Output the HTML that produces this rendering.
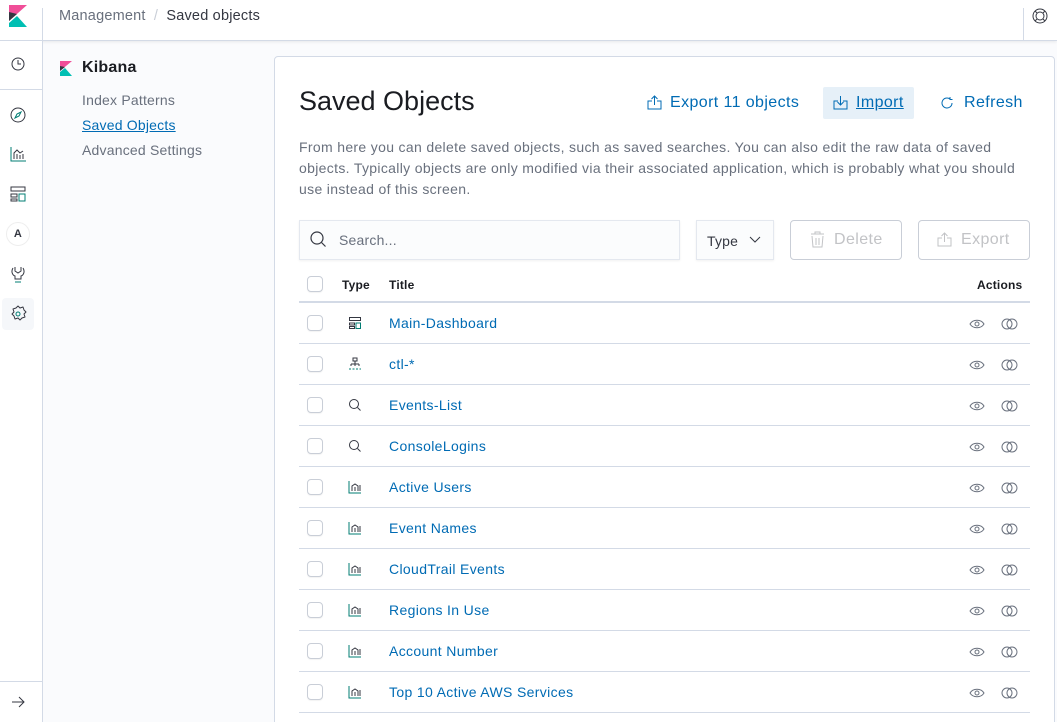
<!DOCTYPE html>
<html><head><meta charset="utf-8"><style>
*{box-sizing:border-box;margin:0;padding:0}
html{width:1057px;height:722px;overflow:hidden}
body{width:1057px;height:722px;overflow:hidden;background:#fafbfd;font-family:"Liberation Sans",sans-serif;position:relative;color:#343741;letter-spacing:.2px}
.top{position:absolute;left:0;top:0;width:1057px;height:41px;background:#fff;border-bottom:1px solid #d3dae6;box-shadow:0 1px 3px rgba(0,0,0,.08)}
.nav{position:absolute;left:0;top:41px;width:43px;height:681px;background:#fff;border-right:1px solid #d3dae6}
.ab{position:absolute}
.side{position:absolute;left:43px;top:41px;width:231px;height:681px}
.panel{position:absolute;left:274px;top:56px;width:781px;height:680px;background:#fff;border:1px solid #d3dae6;border-radius:4px}
.lnk{color:#006bb4}
.row{position:absolute;left:299px;width:731px;height:41px;border-bottom:1px solid #d3dae6}
.cb{position:absolute;left:8px;top:12px;width:16px;height:16px;border:1px solid #c9ced7;border-radius:4px;background:#fff;box-shadow:0 1px 1px rgba(0,0,0,.05)}
.row .t{position:absolute;left:90px;top:12px;font-size:14px;color:#006bb4;letter-spacing:.35px}
.row .ic{position:absolute;left:49px;top:13px}
.row .a1{position:absolute;left:670px;top:14px}
.row .a2{position:absolute;left:702px;top:14px}
</style></head><body>
<div class="top">
 <svg class="ab" style="left:9px;top:5px" width="18" height="22" viewBox="0 0 18 22"><path d="M0 0h18L0 16z" fill="#f04e98"/><path d="M0 7v9l8-7z" fill="#343741"/><path d="M0 22h18L8 11 0 18z" fill="#00bfb3"/></svg>
 <div class="ab" style="left:42px;top:8px;width:1px;height:33px;background:#d3dae6"></div>
 <div class="ab" style="left:59px;top:8px;font-size:14.5px;color:#69707d">Management <span style="color:#c9ced7;margin:0 4px">/</span> <span style="color:#343741">Saved objects</span></div>
 <div class="ab" style="left:1023px;top:8px;width:1px;height:33px;background:#d3dae6"></div>
 <svg class="ab" style="left:1032px;top:8px" width="16" height="16" viewBox="0 0 16 16" fill="none" stroke="#343741"><circle cx="8" cy="8" r="7"/><circle cx="8" cy="8" r="4"/><path d="M3 3l2 2M13 3l-2 2M3 13l2-2M13 13l-2-2"/></svg>
</div>
<div class="nav">
 <svg class="ab" style="left:11px;top:16px" width="14" height="14" viewBox="0 0 14 14" fill="none" stroke="#343741"><circle cx="7" cy="7" r="6"/><path d="M7 3v4h3"/></svg>
 <div class="ab" style="left:0;top:48px;width:42px;height:1px;background:#d3dae6"></div>
 <svg class="ab" style="left:10px;top:66px" width="16" height="16" viewBox="0 0 16 16" fill="none"><circle cx="8" cy="8" r="7" stroke="#343741"/><path d="M5 11l2-4 4-2-2 4z" stroke="#017d73"/></svg>
 <svg class="ab" style="left:10px;top:105px" width="16" height="16" viewBox="0 0 16 16" fill="none" stroke="#343741"><path d="M1 1v14h15" stroke="#017d73"/><path d="M4 13V7l3-3 3 3 3-2M7 13V8M10 13V9M13 13V8"/></svg>
 <svg class="ab" style="left:10px;top:145px" width="16" height="16" viewBox="0 0 16 16" fill="none" stroke="#343741"><rect x="1" y="1" width="14" height="4"/><rect x="1" y="8" width="6" height="3"/><rect x="1" y="13" width="6" height="2"/><rect x="9" y="8" width="6" height="7" stroke="#017d73"/></svg>
 <div class="ab" style="left:6px;top:181px;width:24px;height:24px;border:1px solid #eee;border-radius:12px;font-size:11px;font-weight:bold;text-align:center;line-height:22px">A</div>
 <svg class="ab" style="left:11px;top:225px" width="14" height="17" viewBox="0 0 14 17" fill="none" stroke="#343741"><path d="M4 1v4l3 2 3-2V1M2 2C0 5 1 9 4 10v3h6v-3c3-1 4-5 2-8"/><path d="M4 16h6" stroke="#017d73"/></svg>
 <div class="ab" style="left:2px;top:257px;width:32px;height:32px;background:#f5f7fa;border-radius:4px"></div>
 <svg class="ab" style="left:9px;top:264px" width="18" height="18" viewBox="0 0 18 18" fill="none" stroke="#343741"><path d="M9 1l2 2 3-1 1 3 2 2-2 2 1 3-3 1-2 2-2-2-3 1-1-3-2-2 2-2-1-3 3-1z" stroke-linejoin="round"/><circle cx="9" cy="9" r="2" stroke="#017d73"/></svg>
 <div class="ab" style="left:0;top:640px;width:42px;height:1px;background:#d3dae6"></div>
 <svg class="ab" style="left:11px;top:654px" width="14" height="14" viewBox="0 0 14 14" fill="none" stroke="#343741"><path d="M1 7h12M8 2l5 5-5 5"/></svg>
</div>
<div class="side">
 <svg class="ab" style="left:17px;top:20px" width="12" height="15" viewBox="0 0 12 15"><path d="M0 0h12L0 10z" fill="#f04e98"/><path d="M0 5v5l5-4z" fill="#343741"/><path d="M0 15h12L5 7 0 11z" fill="#00bfb3"/></svg>
 <div class="ab" style="left:39px;top:18px;font-size:16px;font-weight:bold;color:#1a1c21">Kibana</div>
 <div class="ab" style="left:39px;top:51px;font-size:14px;color:#69707d">Index Patterns</div>
 <div class="ab lnk" style="left:39px;top:76px;font-size:14px;text-decoration:underline">Saved Objects</div>
 <div class="ab" style="left:39px;top:101px;font-size:14px;color:#69707d">Advanced Settings</div>
</div>
<div class="panel"></div>
<div class="ab" style="left:299px;top:86px;font-size:27px;color:#1a1c21;letter-spacing:0">Saved Objects</div>
<svg class="ab" style="left:647px;top:95px" width="15" height="15" viewBox="0 0 15 15" fill="none" stroke="#006bb4"><path d="M5 6H1v8h13V6h-4M7.5 10V1M4.5 4l3-3 3 3"/></svg>
<div class="ab lnk" style="left:670px;top:94px;font-size:16px;letter-spacing:.4px">Export 11 objects</div>
<div class="ab" style="left:823px;top:87px;width:91px;height:32px;background:#e6f0f8;border-radius:2px"></div>
<svg class="ab" style="left:833px;top:95px" width="15" height="15" viewBox="0 0 15 15" fill="none" stroke="#006bb4"><path d="M5 6H1v8h13V6h-4M7.5 1v9M4.5 7l3 3 3-3"/></svg>
<div class="ab lnk" style="left:856px;top:94px;font-size:16px;text-decoration:underline;letter-spacing:.4px">Import</div>
<svg class="ab" style="left:940px;top:96px" width="14" height="14" viewBox="0 0 14 14" fill="none" stroke="#006bb4"><path d="M12 7a5 5 0 1 1-2-4M10 1v2.5h2.5"/></svg>
<div class="ab lnk" style="left:964px;top:94px;font-size:16px;letter-spacing:.4px">Refresh</div>
<div class="ab" style="left:299px;top:137px;width:740px;font-size:14px;line-height:21px;color:#69707d;white-space:nowrap;letter-spacing:.33px">From here you can delete saved objects, such as saved searches. You can also edit the raw data of saved<br>objects. Typically objects are only modified via their associated application, which is probably what you should<br>use instead of this screen.</div>
<div class="ab" style="left:299px;top:220px;width:381px;height:40px;background:#fbfcfd;border:1px solid #e4e8ef;box-shadow:0 1px 2px rgba(0,0,0,.06)"></div>
<svg class="ab" style="left:310px;top:231px" width="17" height="17" viewBox="0 0 17 17" fill="none" stroke="#343741" stroke-width="1.2"><circle cx="7" cy="7" r="6"/><path d="M11.5 11.5l4 4"/></svg>
<div class="ab" style="left:339px;top:232px;font-size:14px;color:#69707d">Search...</div>
<div class="ab" style="left:696px;top:220px;width:78px;height:40px;background:#fbfcfd;border:1px solid #e4e8ef;box-shadow:0 1px 2px rgba(0,0,0,.06)"></div>
<div class="ab" style="left:707px;top:233px;font-size:14px;color:#343741">Type</div>
<svg class="ab" style="left:749px;top:236px" width="12" height="8" viewBox="0 0 12 8" fill="none" stroke="#343741"><path d="M1 1l5 5 5-5"/></svg>
<div class="ab" style="left:790px;top:220px;width:112px;height:40px;border:1px solid #c9ced7;border-radius:4px"></div>
<svg class="ab" style="left:810px;top:231px" width="15" height="17" viewBox="0 0 15 17" fill="none" stroke="#c2c3c6"><path d="M1 3h13M5 3V1h5v2M2 5l1 11h9l1-11M6 7v7M9 7v7"/></svg>
<div class="ab" style="left:834px;top:231px;font-size:16px;color:#c2c3c6;letter-spacing:.4px">Delete</div>
<div class="ab" style="left:918px;top:220px;width:112px;height:40px;border:1px solid #c9ced7;border-radius:4px"></div>
<svg class="ab" style="left:937px;top:232px" width="15" height="15" viewBox="0 0 15 15" fill="none" stroke="#c2c3c6"><path d="M5 6H1v8h13V6h-4M7.5 10V1M4.5 4l3-3 3 3"/></svg>
<div class="ab" style="left:961px;top:231px;font-size:16px;color:#c2c3c6;letter-spacing:.4px">Export</div>
<div class="row" style="top:264px;border-bottom:2px solid #d3dae6;height:39px">
 <div class="cb"></div>
 <div class="ab" style="left:43px;top:14px;font-size:12px;font-weight:bold;color:#1a1c21">Type</div>
 <div class="ab" style="left:90px;top:14px;font-size:12px;font-weight:bold;color:#1a1c21">Title</div>
 <div class="ab" style="left:678px;top:14px;font-size:12px;font-weight:bold;color:#1a1c21">Actions</div>
</div>
<div id="rows"></div>
<script>
var items=[["Main-Dashboard","d"],["ctl-*","i"],["Events-List","s"],["ConsoleLogins","s"],["Active Users","v"],["Event Names","v"],["CloudTrail Events","v"],["Regions In Use","v"],["Account Number","v"],["Top 10 Active AWS Services","v"]];
var ic={d:'<svg width="14" height="14" viewBox="0 0 14 14" fill="none" stroke="#343741"><rect x="1.5" y="1.5" width="11" height="3"/><rect x="1.5" y="7" width="5" height="2"/><rect x="1.5" y="10.5" width="5" height="2"/><rect x="8" y="7" width="4.5" height="5.5" stroke="#017d73"/></svg>',
i:'<svg width="14" height="14" viewBox="0 0 14 14" fill="none" stroke="#343741"><rect x="5" y="1" width="4" height="3"/><path d="M7 4v3M3 7h8M3 7v2M11 7v2M7 7v2"/><path d="M1 12h12" stroke="#017d73" stroke-dasharray="2 1.5"/></svg>',
s:'<svg width="14" height="14" viewBox="0 0 14 14" fill="none" stroke="#343741"><circle cx="6" cy="6" r="4.5"/><path d="M9.5 9.5l3 3"/></svg>',
v:'<svg width="14" height="14" viewBox="0 0 14 14" fill="none" stroke="#343741"><path d="M1 1v12h12" stroke="#017d73"/><path d="M4 11V6l3-2 3 2v5M7 11V7M10 11V7M12 5v6"/></svg>'};
var eye='<svg width="16" height="12" viewBox="0 0 16 12" fill="none" stroke="#69707d"><path d="M1 6c3-5 11-5 14 0-3 5-11 5-14 0z"/><circle cx="8" cy="6" r="2"/></svg>';
var rel='<svg width="17" height="12" viewBox="0 0 17 12" fill="none" stroke="#69707d"><circle cx="6" cy="6" r="5"/><circle cx="11" cy="6" r="5"/></svg>';
var h='';items.forEach(function(it,k){h+='<div class="row" style="top:'+(303+41*k)+'px"><div class="cb"></div><div class="ic">'+ic[it[1]]+'</div><div class="t">'+it[0]+'</div><div class="a1">'+eye+'</div><div class="a2">'+rel+'</div></div>';});
document.getElementById('rows').innerHTML=h;
</script>
</body></html>
